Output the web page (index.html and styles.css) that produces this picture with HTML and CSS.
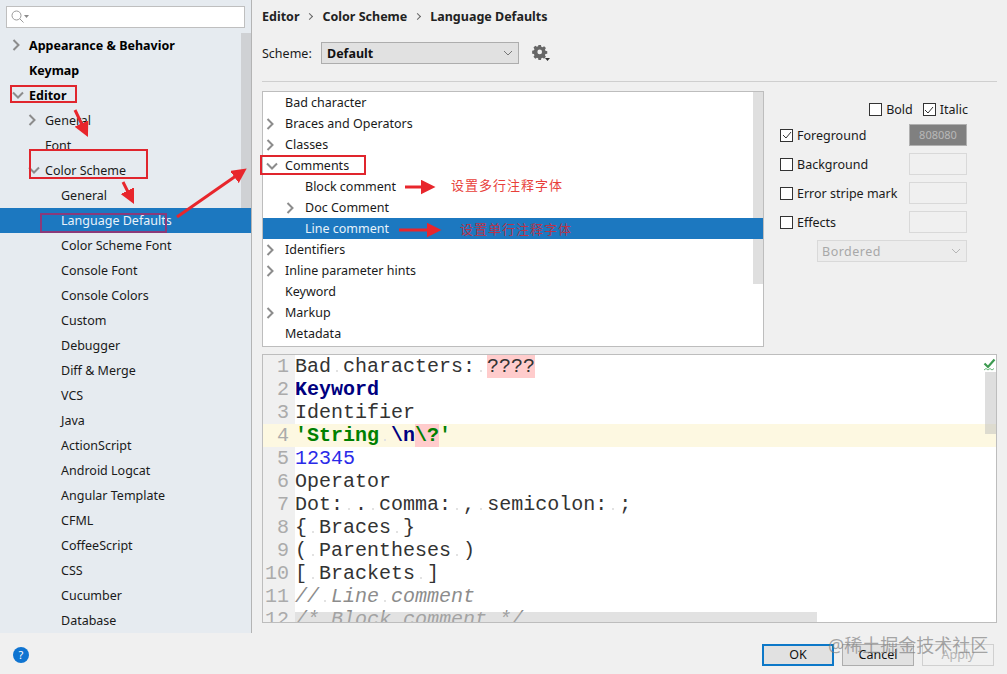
FILE: index.html
```html
<!DOCTYPE html>
<html lang="en">
<head>
    <meta charset="UTF-8">
    <meta name="viewport" content="width=device-width, initial-scale=1.0">
    <title>Settings</title>
    <link rel="stylesheet" href="styles.css">
</head>
<body>
    <div class="dialog">
        <div class="main">
            <div class="sidebar">
                <div class="search">
                    <svg width="20" height="16" viewBox="0 0 20 16"><circle cx="6.5" cy="6.5" r="4.5" fill="none" stroke="#9a9a9a"/><path d="M10 10l3.5 3.5" stroke="#9a9a9a" fill="none"/><path d="M14 6h5l-2.5 3z" fill="#8a8a8a"/></svg>
                </div>
                <div class="side-body">
                    <div class="side-thumb"></div>
                    <div class="side-list">
                        <div class="side-row bold"><svg class="arrow" viewBox="0 0 12 12"><path d="M1.500 1l5 5-5 5"/></svg>Appearance &amp; Behavior</div>
                        <div class="side-row bold"><span class="gap"></span>Keymap</div>
                        <div class="side-row bold"><svg class="arrow" viewBox="0 0 12 12"><path d="M1 3.500l5 5 5-5"/></svg>Editor</div>
                        <div class="side-row lvl1"><svg class="arrow" viewBox="0 0 12 12"><path d="M1.500 1l5 5-5 5"/></svg>General</div>
                        <div class="side-row lvl1"><span class="gap"></span>Font</div>
                        <div class="side-row lvl1"><svg class="arrow" viewBox="0 0 12 12"><path d="M1 3.500l5 5 5-5"/></svg>Color Scheme</div>
                        <div class="side-row lvl2">General</div>
                        <div class="side-row lvl2 selected">Language Defaults</div>
                        <div class="side-row lvl2">Color Scheme Font</div>
                        <div class="side-row lvl2">Console Font</div>
                        <div class="side-row lvl2">Console Colors</div>
                        <div class="side-row lvl2">Custom</div>
                        <div class="side-row lvl2">Debugger</div>
                        <div class="side-row lvl2">Diff &amp; Merge</div>
                        <div class="side-row lvl2">VCS</div>
                        <div class="side-row lvl2">Java</div>
                        <div class="side-row lvl2">ActionScript</div>
                        <div class="side-row lvl2">Android Logcat</div>
                        <div class="side-row lvl2">Angular Template</div>
                        <div class="side-row lvl2">CFML</div>
                        <div class="side-row lvl2">CoffeeScript</div>
                        <div class="side-row lvl2">CSS</div>
                        <div class="side-row lvl2">Cucumber</div>
                        <div class="side-row lvl2">Database</div>
                    </div>
                </div>
            </div>
            <div class="content">
                <div class="crumbs">
                    <span>Editor</span><i class="sep"></i><span>Color Scheme</span><i class="sep"></i><span>Language Defaults</span>
                </div>
                <div class="scheme">
                    <span class="scheme-label">Scheme:</span>
                    <div class="select">Default
                        <svg width="10" height="6" viewBox="0 0 10 6"><path d="M1 1l4 4 4-4" fill="none" stroke="#777"/></svg>
                    </div>
                    <svg class="gear" width="18" height="18" viewBox="0 0 18 18"><path fill="#666" fill-rule="evenodd" d="M6.600 1h2.800l.4 2 1.300.6 1.800-1.100 2 2-1.100 1.800.6 1.300 2 .4v2.800l-2 .4-.6 1.300 1.100 1.800-2 2-1.800-1.100-1.300.6-.4 2H6.600l-.4-2-1.300-.6-1.800 1.100-2-2 1.100-1.800-.6-1.300-2-.4V7.400l2-.4.6-1.300-1.100-1.800 2-2 1.800 1.100 1.300-.6zM8 6.200a2.600 2.600 0 1 0 0 5.200 2.600 2.600 0 0 0 0-5.200z" transform="translate(0.5 0) scale(0.9)"/><path d="M13 14h5l-2.500 3z" fill="#333"/></svg>
                </div>
                <div class="rule"></div>
                <div class="middle">
                    <div class="tree">
                        <div class="tree-thumb"></div>
                        <div class="tree-row"><span class="gap"></span>Bad character</div>
                        <div class="tree-row"><svg class="arrow" viewBox="0 0 12 12"><path d="M1.500 1l5 5-5 5"/></svg>Braces and Operators</div>
                        <div class="tree-row"><svg class="arrow" viewBox="0 0 12 12"><path d="M1.500 1l5 5-5 5"/></svg>Classes</div>
                        <div class="tree-row"><svg class="arrow" viewBox="0 0 12 12"><path d="M1 3.500l5 5 5-5"/></svg>Comments</div>
                        <div class="tree-row sub"><span class="gap"></span>Block comment</div>
                        <div class="tree-row sub"><svg class="arrow" viewBox="0 0 12 12"><path d="M1.500 1l5 5-5 5"/></svg>Doc Comment</div>
                        <div class="tree-row sub selected"><span class="gap"></span>Line comment</div>
                        <div class="tree-row"><svg class="arrow" viewBox="0 0 12 12"><path d="M1.500 1l5 5-5 5"/></svg>Identifiers</div>
                        <div class="tree-row"><svg class="arrow" viewBox="0 0 12 12"><path d="M1.500 1l5 5-5 5"/></svg>Inline parameter hints</div>
                        <div class="tree-row"><span class="gap"></span>Keyword</div>
                        <div class="tree-row"><svg class="arrow" viewBox="0 0 12 12"><path d="M1.500 1l5 5-5 5"/></svg>Markup</div>
                        <div class="tree-row"><span class="gap"></span>Metadata</div>
                    </div>
                    <div class="attrs">
                        <div class="style-row">
                            <label class="check"><span class="box"></span>Bold</label>
                            <label class="check"><span class="box checked"><svg width="10" height="10" viewBox="0 0 10 10"><path d="M1 5l3 3 5-6"/></svg></span>Italic</label>
                        </div>
                        <div class="attr-row">
                            <label class="check"><span class="box checked"><svg width="10" height="10" viewBox="0 0 10 10"><path d="M1 5l3 3 5-6"/></svg></span>Foreground</label>
                            <div class="swatch filled">808080</div>
                        </div>
                        <div class="attr-row">
                            <label class="check"><span class="box"></span>Background</label>
                            <div class="swatch"></div>
                        </div>
                        <div class="attr-row">
                            <label class="check"><span class="box"></span>Error stripe mark</label>
                            <div class="swatch"></div>
                        </div>
                        <div class="attr-row">
                            <label class="check"><span class="box"></span>Effects</label>
                            <div class="swatch"></div>
                        </div>
                        <div class="effect-select">Bordered
                            <svg width="10" height="6" viewBox="0 0 10 6"><path d="M1 1l4 4 4-4" fill="none" stroke="#b5b5b5"/></svg>
                        </div>
                    </div>
                </div>
                <div class="editor">
                    <div class="line"><span class="num">1</span><span class="code">Bad<i class="ws"> </i>characters:<i class="ws"> </i><span class="bad">????</span></span></div>
                    <div class="line"><span class="num">2</span><span class="code kw">Keyword</span></div>
                    <div class="line"><span class="num">3</span><span class="code">Identifier</span></div>
                    <div class="line caret"><span class="num">4</span><span class="code"><span class="str">'String<i class="ws"> </i></span><span class="esc">\n</span><span class="bad"><span class="str">\?</span></span><span class="str">'</span></span></div>
                    <div class="line"><span class="num">5</span><span class="code number">12345</span></div>
                    <div class="line"><span class="num">6</span><span class="code">Operator</span></div>
                    <div class="line"><span class="num">7</span><span class="code">Dot:<i class="ws"> </i>.<i class="ws"> </i>comma:<i class="ws"> </i>,<i class="ws"> </i>semicolon:<i class="ws"> </i>;</span></div>
                    <div class="line"><span class="num">8</span><span class="code">{<i class="ws"> </i>Braces<i class="ws"> </i>}</span></div>
                    <div class="line"><span class="num">9</span><span class="code">(<i class="ws"> </i>Parentheses<i class="ws"> </i>)</span></div>
                    <div class="line"><span class="num">10</span><span class="code">[<i class="ws"> </i>Brackets<i class="ws"> </i>]</span></div>
                    <div class="line"><span class="num">11</span><span class="code comment">//<i class="ws"> </i>Line<i class="ws"> </i>comment</span></div>
                    <div class="line"><span class="num">12</span><span class="code comment">/*<i class="ws"> </i>Block<i class="ws"> </i>comment<i class="ws"> </i>*/</span></div>
                    <div class="v-thumb"></div>
                    <div class="h-thumb"></div>
                    <svg class="ok-mark" width="13" height="14" viewBox="0 0 13 14"><path d="M1.500 5.500L5 9l6.500-7.500" fill="none" stroke="#3d9a50" stroke-width="2.200"/><path d="M1 12l2-1.500 2 1.500 2-1.500 2 1.500 2-1.500" fill="none" stroke="#6cb57c"/></svg>
                </div>
            </div>
        </div>
        <div class="footer">
            <div class="help">?</div>
            <div class="buttons">
                <div class="btn primary">OK</div>
                <div class="btn">Cancel</div>
                <div class="btn disabled">Apply</div>
            </div>
        </div>
    </div>

    <!-- red annotations drawn on top of the screenshot -->
    <svg class="marks" width="1007" height="674" viewBox="0 0 1007 674">
        <defs>
            <marker id="head" markerWidth="5" markerHeight="5" refX="3.500" refY="2.500" orient="auto"><path d="M0 0l5 2.500L0 5z" fill="#e8262c"/></marker>
        </defs>
        <g fill="none" stroke="#e0252d" stroke-width="2">
            <rect x="11" y="86" width="65" height="16"/>
            <rect x="30" y="150" width="117" height="28"/>
            <rect x="41" y="214" width="125" height="18" stroke="#8a3a7a"/>
            <rect x="261" y="156" width="104" height="18"/>
        </g>
        <g fill="none" stroke="#e8262c" stroke-width="3" marker-end="url(#head)">
            <path d="M75 110l11 23"/>
            <path d="M123 182l9 18"/>
            <path d="M177 217l66-46"/>
            <path d="M405 187h26"/>
            <path d="M399 230h38"/>
        </g>
    </svg>
    <div class="note note-block">设置多行注释字体</div>
    <div class="note note-line">设置单行注释字体</div>
    <div class="watermark">@稀土掘金技术社区</div>
</body>
</html>
```

FILE: styles.css
```css
* {
    box-sizing: border-box;
}
html, body {
    margin: 0;
    padding: 0;
}
body {
    width: 1007px;
    height: 674px;
    overflow: hidden;
    position: relative;
    background-color: #f0f0f0;
    color: #1a1a1a;
    font-family: "Noto Sans", "Noto Sans CJK SC", sans-serif;
    font-size: 12.5px;
}
.dialog {
    height: 674px;
    display: flex;
    flex-direction: column;
}
.main {
    display: flex;
    height: 633px;
}
.footer {
    height: 41px;
    display: flex;
    align-items: center;
    justify-content: space-between;
    padding: 3px 13px 0 13px;
}

/* left settings tree */
.sidebar {
    width: 252px;
    flex: none;
    background-color: #e6ebf0;
    border-right: 1px solid #b4b4b4;
    display: flex;
    flex-direction: column;
    overflow: hidden;
}
.search {
    height: 22px;
    margin: 6px 6px 5px 6px;
    background-color: #fff;
    border: 1px solid #bfbfbf;
    display: flex;
    align-items: center;
    padding-left: 3px;
}
.side-body {
    display: flex;
    flex: 1;
    position: relative;
    overflow: hidden;
}
.side-list {
    width: 100%;
}
.side-row {
    height: 25px;
    display: flex;
    align-items: center;
    padding: 0 0 1px 12px;
    white-space: nowrap;
    position: relative;
}
.side-row .arrow {
    margin-right: 5px;
}
.side-row .gap {
    width: 17px;
}
.side-row.bold {
    font-weight: 700;
    color: #000;
}
.side-row.lvl1 {
    padding-left: 28px;
}
.side-row.lvl2 {
    padding-left: 61px;
}
.side-row.selected, .tree-row.selected {
    background-color: #1c78c0;
    color: #e8f2fa;
}
.side-thumb {
    position: absolute;
    right: 0;
    top: 0;
    width: 10px;
    height: 175px;
    background-color: #cfd1d4;
}
.arrow {
    width: 12px;
    height: 12px;
    flex: none;
}
.arrow path {
    fill: none;
    stroke: #8c8c8c;
    stroke-width: 2;
}

/* right pane */
.content {
    flex: 1;
    min-width: 0;
    padding: 0 10px 0 10px;
    display: flex;
    flex-direction: column;
}
.crumbs {
    height: 33px;
    display: flex;
    align-items: center;
    font-weight: 700;
    color: #222;
}
.sep {
    width: 5px;
    height: 5px;
    margin: 0 10px 0 8px;
    border-top: 1px solid #666;
    border-right: 1px solid #666;
    transform: rotate(45deg);
}
.scheme {
    height: 22px;
    margin-top: 9px;
    display: flex;
    align-items: center;
}
.scheme-label {
    width: 59px;
}
.select {
    width: 198px;
    height: 22px;
    background-color: #e1e1e1;
    border: 1px solid #adadad;
    font-weight: 700;
    color: #111;
    display: flex;
    align-items: center;
    justify-content: space-between;
    padding: 0 5px;
}
.gear {
    margin-left: 13px;
}
.rule {
    height: 1px;
    margin-top: 17px;
    background-color: #cfcfcf;
}
.middle {
    display: flex;
    margin-top: 9px;
    height: 256px;
}
.tree {
    width: 502px;
    height: 256px;
    background-color: #fff;
    border: 1px solid #bdbdbd;
    position: relative;
    overflow: hidden;
}
.tree-row {
    height: 21px;
    display: flex;
    align-items: center;
    padding: 0 0 0 3px;
    white-space: nowrap;
    position: relative;
}
.tree-row .arrow {
    margin-right: 7px;
}
.tree-row .gap {
    width: 19px;
}
.tree-row.sub {
    padding-left: 23px;
}
.tree-thumb {
    position: absolute;
    right: 0;
    top: 0;
    width: 10px;
    height: 192px;
    background-color: #dfdfdf;
}
.attrs {
    flex: 1;
    padding: 1px 30px 0 16px;
}
.style-row {
    height: 21px;
    margin: 7px -1px 0 0;
    display: flex;
    justify-content: flex-end;
    gap: 10px;
}
.check {
    display: flex;
    align-items: center;
    gap: 4px;
    white-space: nowrap;
}
.box {
    width: 13px;
    height: 13px;
    background-color: #fff;
    border: 1px solid #333;
    display: flex;
    align-items: center;
    justify-content: center;
}
.box svg path {
    fill: none;
    stroke: #333;
    stroke-width: 1;
}
.attr-row {
    height: 22px;
    margin-bottom: 7px;
    display: flex;
    align-items: center;
    justify-content: space-between;
}
.style-row + .attr-row {
    margin-top: 4px;
}
.swatch {
    width: 58px;
    height: 22px;
    border: 1px solid #d9d9d9;
}
.swatch.filled {
    background-color: #808080;
    border-color: #b0b0b0;
    color: #b8b8b8;
    font-size: 11px;
    text-align: center;
    line-height: 20px;
}
.effect-select {
    width: 150px;
    height: 22px;
    margin: 1px 0 0 37px;
    background-color: #ececec;
    border: 1px solid #d9d9d9;
    color: #a8a8a8;
    letter-spacing: 0.5px;
    display: flex;
    align-items: center;
    justify-content: space-between;
    padding: 0 5px 0 4px;
}

/* code preview */
.editor {
    height: 269px;
    margin-top: 7px;
    background-color: #fff;
    border: 1px solid #bdbdbd;
    position: relative;
    overflow: hidden;
    font-family: "Liberation Mono", monospace;
    font-size: 20px;
    color: #333;
}
.line {
    height: 23px;
    display: flex;
    line-height: 23px;
}
.num {
    width: 32px;
    flex: none;
    padding-right: 6px;
    text-align: right;
    background-color: #f0f0f0;
    color: #ababab;
}
.code {
    white-space: pre;
}
.ws {
    background: radial-gradient(circle at 50% 16px, #e2e2e2 1px, transparent 1.5px);
}
.caret, .caret .num {
    background-color: #fdf8e1;
}
.kw {
    color: #000080;
    font-weight: 700;
}
.str {
    color: #008000;
    font-weight: 700;
}
.esc {
    color: #000080;
    font-weight: 700;
}
.number {
    color: #2a2ae8;
}
.comment {
    color: #8c8c8c;
    font-style: italic;
}
.bad {
    background-color: #ffcccc;
}
.v-thumb {
    position: absolute;
    right: 0;
    top: 17px;
    width: 11px;
    height: 62px;
    background-color: rgba(190, 190, 190, 0.5);
}
.h-thumb {
    position: absolute;
    left: 32px;
    bottom: 0;
    width: 522px;
    height: 10px;
    background-color: rgba(190, 190, 190, 0.45);
}
.ok-mark {
    position: absolute;
    right: 0;
    top: 3px;
}

/* bottom bar */
.help {
    width: 16px;
    height: 16px;
    border-radius: 50%;
    background-color: #0f74d1;
    color: #fff;
    font-size: 11px;
    line-height: 16px;
    text-align: center;
}
.buttons {
    display: flex;
    gap: 8px;
}
.btn {
    width: 72px;
    height: 22px;
    background-color: #e1e1e1;
    border: 1px solid #adadad;
    color: #111;
    text-align: center;
    line-height: 20px;
}
.btn.primary {
    border: 2px solid #0d78c8;
    line-height: 18px;
}
.btn.disabled {
    background-color: #f0f0f0;
    border-color: #d0d0d0;
    color: #b5b5b5;
}

/* annotations */
.marks {
    position: absolute;
    left: 0;
    top: 0;
    pointer-events: none;
}
.note {
    position: absolute;
    font-size: 13px;
    letter-spacing: 1px;
    color: #e8403a;
    white-space: nowrap;
}
.note-block {
    left: 451px;
    top: 175px;
}
.note-line {
    left: 460px;
    top: 219px;
    color: #b8344a;
}
.watermark {
    position: absolute;
    left: 828px;
    top: 631px;
    font-size: 18px;
    color: rgba(130, 130, 130, 0.7);
    white-space: nowrap;
}
```
